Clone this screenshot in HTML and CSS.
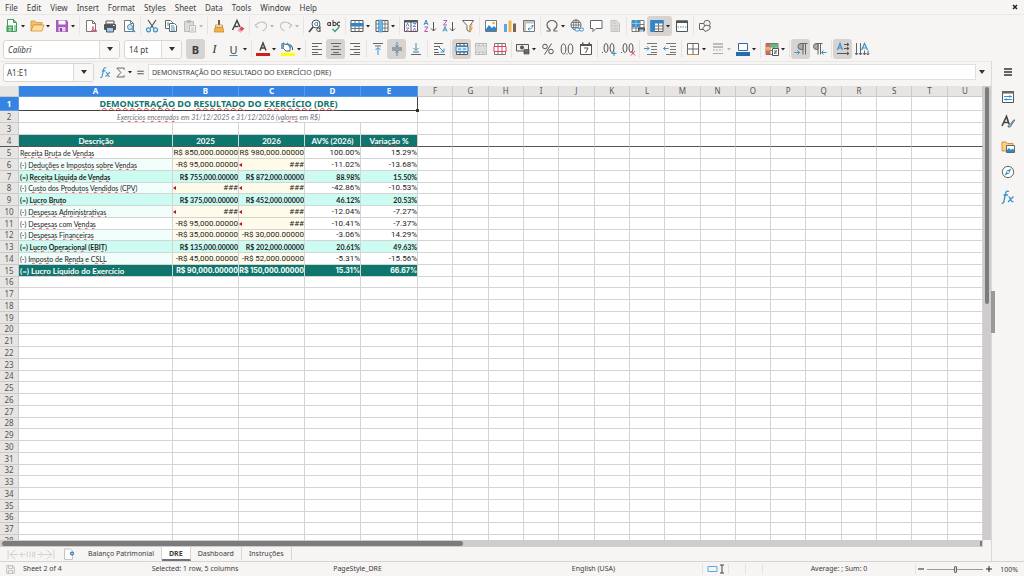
FILE: index.html
```html
<!DOCTYPE html>
<html lang="pt-BR">
<head>
<meta charset="utf-8">
<title>DRE - Calc</title>
<link rel="stylesheet" href="styles.css">
</head>
<body>
<svg class="sprite" aria-hidden="true">
  <symbol id="caret" viewBox="0 0 6 16"><path d="M1 7h4L3 9.500z" fill="#222"/></symbol>
  <symbol id="bigcaret" viewBox="0 0 8 8"><path d="M1 2h6L4 6z" fill="#333"/></symbol>
  <symbol id="new" viewBox="0 0 16 16"><path d="M3.500 1.500h6l3 3v9h-9z" fill="#fff" stroke="#3f9e57"/><path d="M9.500 1.500v3h3" fill="#7bc48d" stroke="#3f9e57"/><path d="M2.500 7.500H9V14H2.500z" fill="#3f9e57"/><path d="M4 9.500h4M4 12h4M6 8.500v5" stroke="#d9f2df" stroke-width=".7"/><path d="M10 8h2M10 10h2M10 12h2" stroke="#3f9e57"/></symbol>
  <symbol id="open" viewBox="0 0 16 16"><path d="M2 13V3h4l1.500 1.500H13V7H4.500z" fill="#f4c26b" stroke="#d9903a" stroke-width=".8"/><path d="M2 13l2.500-6H15l-2 6z" fill="#fde0a0" stroke="#d9903a" stroke-width=".8"/></symbol>
  <symbol id="save" viewBox="0 0 16 16"><path d="M2 2h10.500L14 3.500V14H2z" fill="#a85bbd"/><path d="M4.500 2.500h7v4h-7z" fill="#fff"/><path d="M4.500 9h7v4.500h-7z" fill="#e7cdee"/><path d="M6 10v3.500h2V10z" fill="#8a3fa2"/></symbol>
  <symbol id="pdf" viewBox="0 0 16 16"><path d="M3.500 2.500h6l3 3v8h-9z" fill="#fff" stroke="#777"/><path d="M9.500 2.500v3h3" fill="none" stroke="#777"/><path d="M8 13.500c2-2 2.500-4 2-5-.7 2 1 4 4 4.500-2-.8-4-.3-6 .5z" fill="none" stroke="#d9455c"/></symbol>
  <symbol id="print" viewBox="0 0 16 16"><path d="M4 3h8v3H4z" fill="#fff" stroke="#555"/><rect x="2" y="6" width="12" height="6" rx="1" fill="#555"/><path d="M4.500 9.500h7V14h-7z" fill="#9ed0ee" stroke="#555"/><path d="M11 7.500h1.500" stroke="#fff"/></symbol>
  <symbol id="preview" viewBox="0 0 16 16"><path d="M3.500 2.500h6l3 3v8h-9z" fill="#fff" stroke="#777"/><path d="M9.500 2.500v3h3" fill="none" stroke="#777"/><circle cx="9" cy="9" r="2.500" fill="#cfe8f7" stroke="#3a92c9"/><path d="M11 11l3 3" stroke="#3a92c9" stroke-width="1.400"/></symbol>
  <symbol id="cut" viewBox="0 0 16 16"><path d="M4 2l5.500 8M12 2l-5.500 8" stroke="#555" stroke-width="1.200"/><circle cx="4.500" cy="11.800" r="2" fill="none" stroke="#3a92c9" stroke-width="1.200"/><circle cx="11.500" cy="11.800" r="2" fill="none" stroke="#3a92c9" stroke-width="1.200"/></symbol>
  <symbol id="copy" viewBox="0 0 16 16"><path d="M2.500 2.500h5l2 2v6h-7z" fill="#fff" stroke="#666"/><path d="M6.500 5.500h5l2 2v6h-7z" fill="#fff" stroke="#666"/><path d="M8 8h3M8 10h4M8 12h4M4 5h2M4 7h2" stroke="#3a92c9"/></symbol>
  <symbol id="paste" viewBox="0 0 16 16"><path d="M2.500 3.500h9v10h-9z" fill="#ddd" stroke="#bbb"/><path d="M5 2h4v3H5z" fill="#bbb"/><path d="M7.500 7.500h6v6.500h-6z" fill="#f3f3f3" stroke="#bbb"/><path d="M9 10h3M9 12h3" stroke="#bbb"/></symbol>
  <symbol id="clone" viewBox="0 0 16 16"><path d="M7 2h2v5H7z" fill="#7a5c30"/><path d="M4.500 7h7v2h-7z" fill="#fff" stroke="#b9883c" stroke-width=".8"/><path d="M4 9.500h8l.7 4.500H3.300z" fill="#efb34e" stroke="#c98b2d" stroke-width=".8"/></symbol>
  <symbol id="clear" viewBox="0 0 16 16"><path d="M2.500 12L7 2.500 10 9M4.500 8.500h4" fill="none" stroke="#444" stroke-width="1.500"/><path d="M7.500 12.500l4-4 3 2-4 4z" fill="#e0475a"/><path d="M7.500 12.500l1.500-1.500 3 2-1.500 1.500z" fill="#f7b6be"/></symbol>
  <symbol id="undo" viewBox="0 0 16 16"><path d="M2 7l3 3M2 7l4-2M2.500 7c5-5 11-3 11 1 0 2.500-2 4-4 5" fill="none" stroke="#c4c2c0" stroke-width="1.100"/></symbol>
  <symbol id="redo" viewBox="0 0 16 16"><path d="M14 7l-3 3M14 7l-4-2M13.500 7c-5-5-11-3-11 1 0 2.500 2 4 4 5" fill="none" stroke="#c4c2c0" stroke-width="1.100"/></symbol>
  <symbol id="find" viewBox="0 0 16 16"><circle cx="9" cy="6" r="4" fill="#fff" stroke="#555"/><path d="M6 9l-4 5" stroke="#444" stroke-width="1.600"/><path d="M10.500 4v4M10.500 6.500a1.500 1.500 0 1 1 0-1" fill="none" stroke="#3a92c9"/><path d="M13 8v6M13 12.500a1.700 1.700 0 1 1 0-1.500" fill="none" stroke="#444"/></symbol>
  <symbol id="spell" viewBox="0 0 16 16"><path d="M4.500 4v4M4.500 6.500a1.500 1.500 0 1 1 0-1M7 2v6M7 6.500a1.600 1.600 0 1 0 0-1M14 4.500a1.800 1.800 0 1 0 0 3" fill="none" stroke="#444" stroke-width="1.100"/><path d="M6.500 11l2.500 2.500 4.500-5" fill="none" stroke="#35a36b" stroke-width="1.300"/></symbol>
  <symbol id="rowi" viewBox="0 0 16 16"><path d="M2 2.500h12v11H2z" fill="#fff" stroke="#555"/><path d="M2 10.500h12M6 2.500v11M10 2.500v11" stroke="#777"/><path d="M1.500 5h13v3.500h-13z" fill="#2f86c8"/></symbol>
  <symbol id="coli" viewBox="0 0 16 16"><path d="M2 2.500h12v11H2z" fill="#fff" stroke="#555"/><path d="M2 6h12M2 10h12M11 2.500v11" stroke="#777"/><path d="M4.500 2h4v12h-4z" fill="#6db5e4" stroke="#2f86c8" stroke-width=".6"/></symbol>
  <symbol id="sort" viewBox="0 0 16 16"><path d="M1.500 2.500h13v11h-13z" fill="#fff" stroke="#555"/><path d="M1.500 2h13v2.500h-13zM7.500 4h1v10h-1z" fill="#555"/><path d="M3 8.500L4.500 5 6 8.500M10 5.500h3l-3 3h3" fill="none" stroke="#3a92c9" stroke-width=".9"/><path d="M3 10h3l-3 3h3M10 13l1.500-3 1.500 3" fill="none" stroke="#b05cc0" stroke-width=".9"/></symbol>
  <symbol id="az" viewBox="0 0 16 16"><path d="M2 7l2-5 2 5M3 5.500h2" fill="none" stroke="#3a92c9"/><path d="M2.500 9h3.500l-3.500 4.500H6" fill="none" stroke="#b05cc0"/><path d="M11.500 4v9M9 10.500l2.500 2.500 2.500-2.500" fill="none" stroke="#555"/></symbol>
  <symbol id="za" viewBox="0 0 16 16"><path d="M2 13.500l2-5 2 5M3 12h2" fill="none" stroke="#3a92c9"/><path d="M2.500 2.500H6L2.500 7H6" fill="none" stroke="#b05cc0"/><path d="M11.500 4v9M9 10.500l2.500 2.500 2.500-2.500" fill="none" stroke="#555"/></symbol>
  <symbol id="filter" viewBox="0 0 16 16"><path d="M2.500 2.500h11L10 7.500V14l-3-2V7.500z" fill="#fff" stroke="#666"/><path d="M12 6l-2 4h2l-2 4" fill="none" stroke="#f0a53a" stroke-width="1.300"/></symbol>
  <symbol id="image" viewBox="0 0 16 16"><path d="M2.500 2.500h11v11h-11z" fill="#fff" stroke="#777"/><path d="M3 11l3-4 3 3 2-2 2 2v3H3z" fill="#2f86c8"/><circle cx="10.500" cy="5" r="1.300" fill="#f0b13a"/></symbol>
  <symbol id="chart" viewBox="0 0 16 16"><path d="M2 6h3v8H2z" fill="#5aa9dd"/><path d="M6.500 2.500h3V14h-3z" fill="#efb34e"/><path d="M11 5.500h3V14h-3z" fill="#7a6650"/></symbol>
  <symbol id="pivot" viewBox="0 0 16 16"><path d="M2.500 2.500h11v11h-11z" fill="#fff" stroke="#777"/><path d="M3 3h10v2.500H3zM3 3h2v10H3z" fill="#c5c3c1"/><path d="M7 11c4 0 4.500-1 4.500-4M10 8.500L11.500 7 13 8.500M8.500 9.500L7 11l1.500 1.500" fill="none" stroke="#3a92c9"/></symbol>
  <symbol id="omega" viewBox="0 0 16 16"><path d="M2.500 13h3.500v-1.500C4 10.500 3 9 3 7a5 4.500 0 0 1 10 0c0 2-1 3.500-3 4.500V13h3.500" fill="none" stroke="#666" stroke-width="1.200"/></symbol>
  <symbol id="link" viewBox="0 0 16 16"><circle cx="7" cy="7" r="5" fill="#fff" stroke="#666"/><path d="M2 7h10M7 2v10M3 4.500h8M3 9.500h6" stroke="#666" stroke-width=".8"/><ellipse cx="7" cy="7" rx="2.500" ry="5" fill="none" stroke="#666" stroke-width=".8"/><rect x="6" y="10" width="4.500" height="3" rx="1.500" fill="#fff" stroke="#3a92c9"/><rect x="10.500" y="10" width="4" height="3" rx="1.500" fill="#fff" stroke="#3a92c9"/></symbol>
  <symbol id="comment" viewBox="0 0 16 16"><path d="M2.500 2.500h11.500v8H8L5 13.500v-3H2.500z" fill="#fff" stroke="#666"/></symbol>
  <symbol id="hf" viewBox="0 0 16 16"><path d="M4 2.500h5.500l3 3v8H4z" fill="#dedcda" stroke="#c4c2c0"/><path d="M6 5h3M6 8h5M6 11h5" stroke="#c4c2c0"/></symbol>
  <symbol id="parea" viewBox="0 0 16 16"><path d="M2 2.500h12v11H2z" fill="#fff" stroke="#777"/><path d="M2 6.500h12M2 10h12M6 2.500v11M10 2.500v11" stroke="#777"/><path d="M2 2h8v7H2z" fill="#3a92c9"/><path d="M2 5.500h8M6 2v7" stroke="#a9d6f0" stroke-width=".7"/><rect x="8" y="9.500" width="7" height="3.500" fill="#555"/><path d="M9.500 11.500h4V14h-4z" fill="#9ed0ee"/></symbol>
  <symbol id="freeze" viewBox="0 0 16 16"><path d="M2 2.500h12v11H2z" fill="#fff" stroke="#555"/><path d="M2 8h12M2 11h12M9.500 5v9" stroke="#777"/><path d="M1.500 2h13v3.500H6V14H1.500z" fill="#2f86c8"/></symbol>
  <symbol id="split" viewBox="0 0 16 16"><path d="M2.500 3h11v10.500h-11z" fill="#fff" stroke="#555"/><path d="M2 2.500h12V5H2z" fill="#555"/><path d="M3.500 9h9" stroke="#3a92c9" stroke-dasharray="1.500 1"/></symbol>
  <symbol id="shapes" viewBox="0 0 16 16"><path d="M2.500 5.500h6v6h-6z" fill="none" stroke="#666"/><circle cx="10" cy="5.500" r="3.200" fill="#f5f4f2" stroke="#666"/><path d="M8 13.500l-2.500-3.500L9 7l4.500 1.500-1 3z" fill="#f5f4f2" stroke="#666"/></symbol>

  <symbol id="fcolor" viewBox="0 0 16 16"><path d="M5 9.500L8 2l3 7.500M6 7h4" fill="none" stroke="#444" stroke-width="1.500"/><path d="M1 12h14v3H1z" fill="#c9211e"/></symbol>
  <symbol id="bcolor" viewBox="0 0 16 16"><path d="M4 3l6 1v6H6L3 7z" fill="#fff" stroke="#666"/><path d="M2 8V3l2-1M7 2l4 5" stroke="#3a92c9" stroke-width="1.500" fill="none"/><path d="M10.500 3.500l2 3v2.500" stroke="#555" fill="none"/><path d="M1 12h14v3H1z" fill="#ffff00"/></symbol>
  <symbol id="al" viewBox="0 0 16 16"><path d="M3 2.500h10M3 5.500h6M3 8.500h10M3 11.500h6M3 13.500h10" stroke="#666"/></symbol>
  <symbol id="ac" viewBox="0 0 16 16"><path d="M3 2.500h10M5 5.500h6M3 8.500h10M5 11.500h6M3 13.500h10" stroke="#666"/></symbol>
  <symbol id="ar" viewBox="0 0 16 16"><path d="M3 2.500h10M7 5.500h6M3 8.500h10M7 11.500h6M3 13.500h10" stroke="#666"/></symbol>
  <symbol id="vt" viewBox="0 0 16 16"><path d="M3 2.500h10M5 5h6" stroke="#666"/><path d="M8 14V7M5.500 9L8 6.500 10.500 9" fill="none" stroke="#3a92c9"/></symbol>
  <symbol id="vm" viewBox="0 0 16 16"><path d="M3 7h10M3 9h10" stroke="#666"/><path d="M8 1v5M6.500 4.500L8 6l1.500-1.500M8 15v-5M6.500 11.500L8 10l1.500 1.500" fill="none" stroke="#3a92c9"/></symbol>
  <symbol id="vb" viewBox="0 0 16 16"><path d="M3 13.500h10M5 11h6" stroke="#666"/><path d="M8 2v7M5.500 7L8 9.500 10.500 7" fill="none" stroke="#3a92c9"/></symbol>
  <symbol id="wrap" viewBox="0 0 16 16"><path d="M3 2.500h9M3 5.500h6M3 8.500h4M3 11.500h5M3 13.500h11" stroke="#666"/><path d="M8 6l5 5M13 7.500V11H9.500" fill="none" stroke="#3a92c9"/></symbol>
  <symbol id="merge" viewBox="0 0 16 16"><path d="M2.500 2.500h11v11h-11zM2.500 5h11M2.500 11h11M6 2.500V5M10 2.500V5M6 11v2.500M10 11v2.500" fill="#fff" stroke="#555"/><path d="M2 5.500h12v5H2z" fill="#d8edf9" stroke="#2f86c8"/><path d="M4 8h3M9 8h3" stroke="#2f86c8"/></symbol>
  <symbol id="mcen" viewBox="0 0 16 16"><path d="M2.500 2.500h11v11h-11zM2.500 5h11M2.500 11h11M6 2.500V5M10 2.500V5M6 11v2.500M10 11v2.500" fill="#eee" stroke="#b8b6b4"/><path d="M2.500 5.500h11v5h-11z" fill="#ddd"/></symbol>
  <symbol id="unm" viewBox="0 0 16 16"><path d="M2.500 2.500h11v11h-11zM2.500 5.500h11M2.500 10.500h11M6 2.500v11M10 2.500v11" fill="#fff" stroke="#777"/><path d="M2 5.500h12v5H2zM6 5.500v5M10 5.500v5" fill="#fff" stroke="#d9455c"/></symbol>
  <symbol id="cur" viewBox="0 0 16 16"><path d="M1.500 3.500h12v6.500h-12z" fill="#eee" stroke="#555"/><circle cx="7" cy="6.500" r="2" fill="#555"/><path d="M9 8.500h5V13H9zM9 10h5M9 11.500h5" fill="#888" stroke="#444" stroke-width=".7"/></symbol>
  <symbol id="pct" viewBox="0 0 16 16"><circle cx="5" cy="5.500" r="2.300" fill="none" stroke="#555"/><circle cx="11" cy="10.500" r="2.300" fill="none" stroke="#555"/><path d="M11.500 2.500l-7 11" stroke="#555"/></symbol>
  <symbol id="num" viewBox="0 0 16 16"><ellipse cx="4.500" cy="8" rx="2.300" ry="5" fill="none" stroke="#555"/><ellipse cx="11.500" cy="8" rx="2.300" ry="5" fill="none" stroke="#555"/><path d="M7.500 12.500h1v1h-1z" fill="#555"/></symbol>
  <symbol id="date" viewBox="0 0 16 16"><path d="M2.500 3.500h11v10h-11z" fill="#fff" stroke="#555"/><path d="M2 3h12v2H2zM4 1.500h1.500V4H4zM10.500 1.500H12V4h-1.500z" fill="#555"/><path d="M6 7h4l-2.500 5" fill="none" stroke="#555"/></symbol>
  <symbol id="dadd" viewBox="0 0 16 16"><ellipse cx="5" cy="7" rx="2" ry="4.500" fill="none" stroke="#555"/><ellipse cx="11" cy="7" rx="2" ry="4.500" fill="none" stroke="#555"/><path d="M1 11h1v1H1z" fill="#555"/><path d="M13 10v5M10.500 12.500h5" stroke="#3a92c9"/></symbol>
  <symbol id="ddel" viewBox="0 0 16 16"><ellipse cx="5" cy="7" rx="2" ry="4.500" fill="none" stroke="#555"/><ellipse cx="11" cy="7" rx="2" ry="4.500" fill="none" stroke="#555"/><path d="M1 11h1v1H1z" fill="#555"/><path d="M11 10l4 4.500M15 10l-4 4.500" stroke="#e0475a"/></symbol>
  <symbol id="ind" viewBox="0 0 16 16"><path d="M4 2.500h10M8 5.500h6M8 8.500h6M8 11.500h6M4 13.500h10" stroke="#777"/><path d="M1 7.500h5M4 5.500l2 2-2 2" fill="none" stroke="#3a92c9"/></symbol>
  <symbol id="outd" viewBox="0 0 16 16"><path d="M4 2.500h10M8 5.500h6M8 8.500h6M8 11.500h6M4 13.500h10" stroke="#777"/><path d="M6.500 7.500h-5M3.500 5.500l-2 2 2 2" fill="none" stroke="#3a92c9"/></symbol>
  <symbol id="bord" viewBox="0 0 16 16"><path d="M2.500 2.500h11v11h-11z" fill="#fff" stroke="#666"/><path d="M8 3v10M3 8h10" stroke="#666"/><path d="M2 13.500h12" stroke="#b9883c"/></symbol>
  <symbol id="bsty" viewBox="0 0 16 16"><path d="M3 3h10M3 6h10" stroke="#aaa" stroke-width="1.500"/><path d="M3 9h10" stroke="#aaa" stroke-dasharray="2 1"/><path d="M3 12.500h10" stroke="#aaa"/></symbol>
  <symbol id="bcol" viewBox="0 0 16 16"><path d="M3.500 2.500h9v7h-9z" fill="#fff" stroke="#2a6cab"/><path d="M1 11h14v4H1z" fill="#2a6cab"/></symbol>
  <symbol id="cond" viewBox="0 0 16 16"><path d="M2 2.500h12v11H2zM2 6h12M2 9.500h12M6 2.500v11M10 2.500v11" fill="#fff" stroke="#777"/><path d="M2 3h4v3H2zM2 9.500h4V13H2z" fill="#e0626e"/><path d="M6 3h8v3H6z" fill="#5fb978"/><path d="M2 6h4v3.500H2z" fill="#efb34e"/><path d="M8.500 7.500h6v7h-6z" fill="#fff" stroke="#555"/><path d="M10 10h3M10 12h3M12.500 9l-2 4" stroke="#555" stroke-width=".8"/></symbol>
  <symbol id="ltr" viewBox="0 0 16 16"><path d="M10 2.500v11M12.500 2.500v11M14.500 2.500H8" fill="none" stroke="#666"/><path d="M10 2.500H8a3 3 0 0 0 0 6h2z" fill="#aaa" stroke="#666"/><path d="M1.500 11.500h5M4.500 9.500l2 2-2 2" fill="none" stroke="#3a92c9"/></symbol>
  <symbol id="rtl" viewBox="0 0 16 16"><path d="M6 2.500v11M8.500 2.500v11M10.500 2.500H4" fill="none" stroke="#666"/><path d="M6 2.500H4.500a3 3 0 0 0 0 6H6z" fill="#aaa" stroke="#666"/><path d="M14.500 11.500h-5M11.500 9.500l-2 2 2 2" fill="none" stroke="#3a92c9"/></symbol>
  <symbol id="th" viewBox="0 0 16 16"><path d="M2.500 9L5 2.500 7.500 9M3.500 7h3" fill="none" stroke="#3a92c9" stroke-width="1.200"/><path d="M9 3.500h5M9 7.500h5M2 12.500h12M12 2l2 1.500L12 5M12 6l2 1.500L12 9M12 11l2 1.500-2 1.500" fill="none" stroke="#555"/></symbol>
  <symbol id="tv" viewBox="0 0 16 16"><path d="M7.500 9L10.500 2.500 13.500 9M9 7h3" fill="none" stroke="#3a92c9" stroke-width="1.200"/><path d="M2.500 2v12M6.500 2v12M10.500 9.500V14M14 9.500V14M1 12l1.500 2L4 12M5 12l1.500 2L8 12M9 12l1.500 2 1.500-2M12.500 12l1.500 2 1-2" fill="none" stroke="#666"/></symbol>

  <symbol id="fx" viewBox="0 0 16 16"><path d="M9 2.500c-2-1-3 0-3.400 2L4 12c-.4 2-1.300 2.500-2.500 2M3.500 6h4.500" fill="none" stroke="#3a92c9" stroke-width="1.300"/><path d="M8.500 8c2-1 2 6 5 4.500M13.500 7.500L8 13" fill="none" stroke="#3a92c9" stroke-width="1.300"/></symbol>
  <symbol id="sum" viewBox="0 0 16 16"><path d="M12.500 4.500v-2h-9L8.500 8l-5 5.500h9v-2" fill="none" stroke="#666" stroke-width="1.200"/></symbol>
  <symbol id="eq" viewBox="0 0 16 16"><path d="M4 6.500h8M4 9.500h8" stroke="#555" stroke-width="1.300"/></symbol>
  <symbol id="menu" viewBox="0 0 16 16"><path d="M4 5h8M4 8h8M4 11h8" stroke="#333" stroke-width="1.400"/></symbol>
  <symbol id="props" viewBox="0 0 16 16"><path d="M2.500 2.500h11v11h-11z" fill="#fff" stroke="#555"/><path d="M2 2h12v2.500H2z" fill="#666"/><path d="M4 7.500h8M4 10.500h8" stroke="#3a92c9"/><path d="M9 6.500h1.500v2H9zM5.500 9.500H7v2H5.500z" fill="#3a92c9"/></symbol>
  <symbol id="styl" viewBox="0 0 16 16"><path d="M2 12L6.500 2.500 9 10M4 8.500h4.500" fill="none" stroke="#444" stroke-width="1.600"/><path d="M8 13c0-2 1-3 2.500-3L14 5.500l.8.700-3.300 4.800c0 1.500-1.500 2.500-3.500 2z" fill="#7bbbe4" stroke="#555" stroke-width=".7"/></symbol>
  <symbol id="gal" viewBox="0 0 16 16"><path d="M2 12V3h4l1.500 1.500H13V12z" fill="#f7cf86" stroke="#d9903a"/><path d="M6.500 6.500h8v7h-8z" fill="#fff" stroke="#666"/><path d="M7 11l2-2 2 2 1.500-1.500L14 11v2H7z" fill="#2f86c8"/></symbol>
  <symbol id="nav" viewBox="0 0 16 16"><circle cx="8" cy="8" r="5.700" fill="#fff" stroke="#666"/><path d="M11.500 4.500L9 9.500l-4.500 2L7 6.500z" fill="#3a92c9"/><circle cx="8" cy="8" r="1" fill="#fff"/></symbol>
  <symbol id="disk" viewBox="0 0 16 16"><path d="M2.500 2.500h9l2 2v9h-11zM5 2.500v4h6v-4M5 13.500v-4h6v4" fill="none" stroke="#aaa8a6"/></symbol>
</svg>

<header class="menubar">
  <nav class="menus" aria-label="Menu">
    <button>File</button><button>Edit</button><button>View</button><button>Insert</button><button>Format</button><button>Styles</button><button>Sheet</button><button>Data</button><button>Tools</button><button>Window</button><button>Help</button>
  </nav>
  <button class="close" aria-label="Close"><svg viewBox="0 0 6 6"><path d="M1 1l4 4M5 1L1 5" stroke="#222" stroke-width="1.500"/></svg></button>
</header>

<div class="toolbar" role="toolbar" aria-label="Standard">
  <button class="tool drop" aria-label="New"><svg><use href="#new"/></svg><svg class="car"><use href="#caret"/></svg></button>
  <button class="tool drop" aria-label="Open"><svg><use href="#open"/></svg><svg class="car"><use href="#caret"/></svg></button>
  <button class="tool drop" aria-label="Save"><svg><use href="#save"/></svg><svg class="car"><use href="#caret"/></svg></button>
  <i class="sep"></i>
  <button class="tool" aria-label="Export as PDF"><svg><use href="#pdf"/></svg></button>
  <button class="tool" aria-label="Print"><svg><use href="#print"/></svg></button>
  <button class="tool" aria-label="Print Preview"><svg><use href="#preview"/></svg></button>
  <i class="sep"></i>
  <button class="tool" aria-label="Cut"><svg><use href="#cut"/></svg></button>
  <button class="tool" aria-label="Copy"><svg><use href="#copy"/></svg></button>
  <button class="tool drop off" aria-label="Paste"><svg><use href="#paste"/></svg><svg class="car"><use href="#caret"/></svg></button>
  <i class="sep"></i>
  <button class="tool" aria-label="Clone Formatting"><svg><use href="#clone"/></svg></button>
  <button class="tool" aria-label="Clear Formatting"><svg><use href="#clear"/></svg></button>
  <i class="sep"></i>
  <button class="tool drop off" aria-label="Undo"><svg><use href="#undo"/></svg><svg class="car"><use href="#caret"/></svg></button>
  <button class="tool drop off" aria-label="Redo"><svg><use href="#redo"/></svg><svg class="car"><use href="#caret"/></svg></button>
  <i class="sep"></i>
  <button class="tool" aria-label="Find and Replace"><svg><use href="#find"/></svg></button>
  <button class="tool" aria-label="Spelling"><svg><use href="#spell"/></svg></button>
  <i class="sep"></i>
  <button class="tool drop" aria-label="Row"><svg><use href="#rowi"/></svg><svg class="car"><use href="#caret"/></svg></button>
  <button class="tool drop" aria-label="Column"><svg><use href="#coli"/></svg><svg class="car"><use href="#caret"/></svg></button>
  <i class="sep"></i>
  <button class="tool" aria-label="Sort"><svg><use href="#sort"/></svg></button>
  <button class="tool" aria-label="Sort Ascending"><svg><use href="#az"/></svg></button>
  <button class="tool" aria-label="Sort Descending"><svg><use href="#za"/></svg></button>
  <button class="tool" aria-label="AutoFilter"><svg><use href="#filter"/></svg></button>
  <i class="sep"></i>
  <button class="tool" aria-label="Image"><svg><use href="#image"/></svg></button>
  <button class="tool" aria-label="Chart"><svg><use href="#chart"/></svg></button>
  <button class="tool" aria-label="Pivot Table"><svg><use href="#pivot"/></svg></button>
  <i class="sep"></i>
  <button class="tool drop" aria-label="Symbol"><svg><use href="#omega"/></svg><svg class="car"><use href="#caret"/></svg></button>
  <button class="tool" aria-label="Hyperlink"><svg><use href="#link"/></svg></button>
  <button class="tool" aria-label="Comment"><svg><use href="#comment"/></svg></button>
  <button class="tool" aria-label="Headers and Footers"><svg><use href="#hf"/></svg></button>
  <i class="sep"></i>
  <button class="tool" aria-label="Define Print Area"><svg><use href="#parea"/></svg></button>
  <button class="tool drop on" aria-label="Freeze Rows and Columns"><svg><use href="#freeze"/></svg><svg class="car"><use href="#caret"/></svg></button>
  <button class="tool" aria-label="Split Window"><svg><use href="#split"/></svg></button>
  <i class="sep"></i>
  <button class="tool" aria-label="Show Draw Functions"><svg><use href="#shapes"/></svg></button>
</div>

<div class="toolbar format" role="toolbar" aria-label="Formatting">
  <div class="combo font"><input aria-label="Font Name" value="Calibri"><button aria-label="Font list"><svg><use href="#bigcaret"/></svg></button></div>
  <div class="combo size"><input aria-label="Font Size" value="14 pt"><button aria-label="Size list"><svg><use href="#bigcaret"/></svg></button></div>
  <button class="tool on letter bold">B</button>
  <button class="tool letter italic">I</button>
  <button class="tool drop letter under"><span>U</span><svg class="car"><use href="#caret"/></svg></button>
  <i class="sep"></i>
  <button class="tool drop" aria-label="Font Color"><svg><use href="#fcolor"/></svg><svg class="car"><use href="#caret"/></svg></button>
  <button class="tool drop" aria-label="Background Color"><svg><use href="#bcolor"/></svg><svg class="car"><use href="#caret"/></svg></button>
  <i class="sep"></i>
  <button class="tool" aria-label="Align Left"><svg><use href="#al"/></svg></button>
  <button class="tool on" aria-label="Center"><svg><use href="#ac"/></svg></button>
  <button class="tool" aria-label="Align Right"><svg><use href="#ar"/></svg></button>
  <i class="sep"></i>
  <button class="tool" aria-label="Align Top"><svg><use href="#vt"/></svg></button>
  <button class="tool on" aria-label="Center Vertically"><svg><use href="#vm"/></svg></button>
  <button class="tool" aria-label="Align Bottom"><svg><use href="#vb"/></svg></button>
  <i class="sep"></i>
  <button class="tool" aria-label="Wrap Text"><svg><use href="#wrap"/></svg></button>
  <i class="sep"></i>
  <button class="tool on" aria-label="Merge and Center"><svg><use href="#merge"/></svg></button>
  <button class="tool" aria-label="Merge Cells"><svg><use href="#mcen"/></svg></button>
  <button class="tool" aria-label="Unmerge Cells"><svg><use href="#unm"/></svg></button>
  <i class="sep"></i>
  <button class="tool drop" aria-label="Currency"><svg><use href="#cur"/></svg><svg class="car"><use href="#caret"/></svg></button>
  <button class="tool" aria-label="Percent"><svg><use href="#pct"/></svg></button>
  <button class="tool" aria-label="Number"><svg><use href="#num"/></svg></button>
  <button class="tool" aria-label="Date"><svg><use href="#date"/></svg></button>
  <i class="sep"></i>
  <button class="tool" aria-label="Add Decimal Place"><svg><use href="#dadd"/></svg></button>
  <button class="tool" aria-label="Delete Decimal Place"><svg><use href="#ddel"/></svg></button>
  <i class="sep"></i>
  <button class="tool" aria-label="Increase Indent"><svg><use href="#ind"/></svg></button>
  <button class="tool" aria-label="Decrease Indent"><svg><use href="#outd"/></svg></button>
  <i class="sep"></i>
  <button class="tool drop" aria-label="Borders"><svg><use href="#bord"/></svg><svg class="car"><use href="#caret"/></svg></button>
  <button class="tool drop off" aria-label="Border Style"><svg><use href="#bsty"/></svg><svg class="car"><use href="#caret"/></svg></button>
  <button class="tool drop" aria-label="Border Color"><svg><use href="#bcol"/></svg><svg class="car"><use href="#caret"/></svg></button>
  <i class="sep"></i>
  <button class="tool drop" aria-label="Conditional Formatting"><svg><use href="#cond"/></svg><svg class="car"><use href="#caret"/></svg></button>
  <i class="sep"></i>
  <button class="tool on" aria-label="Left-To-Right"><svg><use href="#ltr"/></svg></button>
  <button class="tool" aria-label="Right-To-Left"><svg><use href="#rtl"/></svg></button>
  <i class="sep"></i>
  <button class="tool on" aria-label="Text direction from left to right"><svg><use href="#th"/></svg></button>
  <button class="tool" aria-label="Text direction from top to bottom"><svg><use href="#tv"/></svg></button>
</div>

<div class="work">
  <main class="doc">
    <div class="formulabar">
      <div class="combo name"><input aria-label="Name Box" value="A1:E1"><button aria-label="Names"><svg><use href="#bigcaret"/></svg></button></div>
      <button class="fbtn" aria-label="Function Wizard"><svg><use href="#fx"/></svg></button>
      <button class="fbtn drop" aria-label="Select Function"><svg><use href="#sum"/></svg><svg class="car"><use href="#caret"/></svg></button>
      <button class="fbtn" aria-label="Formula"><svg><use href="#eq"/></svg></button>
      <input class="formula" aria-label="Input line" value="DEMONSTRAÇÃO DO RESULTADO DO EXERCÍCIO (DRE)">
      <button class="expand" aria-label="Expand"><svg><use href="#bigcaret"/></svg></button>
    </div>
    <div class="sheetwrap">
      <div class="sheet">
        <table class="grid">
          <colgroup><col class="c-head"><col class="c-a"><col class="c-b"><col class="c-c"><col class="c-d"><col class="c-e"></colgroup>
          <thead><tr><th></th><th class="sel">A</th><th class="sel">B</th><th class="sel">C</th><th class="sel">D</th><th class="sel">E</th></tr></thead>
          <tbody>
            <tr class="r-title"><th class="sel">1</th><td colspan="5" class="title"><u>DEMONSTRAÇÃO</u> DO <u>RESULTADO</u> DO <u>EXERCÍCIO</u> (<u>DRE</u>)<i class="handle"></i></td></tr>
            <tr><th>2</th><td colspan="5" class="subtitle"><u>Exercícios</u> <u>encerrados</u> em 31/12/2025 e 31/12/2026 (<u>valores</u> em R$)</td></tr>
            <tr><th>3</th><td></td><td></td><td></td><td></td><td></td></tr>
            <tr class="heads frozen"><th>4</th><td><u>Descrição</u></td><td>2025</td><td>2026</td><td>AV% (2026)</td><td><u>Variação</u> %</td></tr>
            <tr><th>5</th><td><u>Receita</u> <u>Bruta</u> de <u>Vendas</u></td><td class="in">R$ 850,000.00000</td><td class="in">R$ 980,000.00000</td><td>100.00%</td><td>15.29%</td></tr>
            <tr class="ded"><th>6</th><td>(-) <u>Deduções</u> e <u>Impostos</u> <u>sobre</u> <u>Vendas</u></td><td class="in">-R$ 95,000.00000</td><td class="in over">###</td><td>-11.02%</td><td>-13.68%</td></tr>
            <tr class="sub"><th>7</th><td>(=) <u>Receita</u> <u>Líquida</u> de <u>Vendas</u></td><td>R$ 755,000.00000</td><td>R$ 872,000.00000</td><td>88.98%</td><td>15.50%</td></tr>
            <tr class="ded"><th>8</th><td>(-) <u>Custo</u> dos <u>Produtos</u> <u>Vendidos</u> (<u>CPV</u>)</td><td class="in over">###</td><td class="in over">###</td><td>-42.86%</td><td>-10.53%</td></tr>
            <tr class="sub"><th>9</th><td>(=) <u>Lucro</u> <u>Bruto</u></td><td>R$ 375,000.00000</td><td>R$ 452,000.00000</td><td>46.12%</td><td>20.53%</td></tr>
            <tr class="ded"><th>10</th><td>(-) <u>Despesas</u> <u>Administrativas</u></td><td class="in over">###</td><td class="in over">###</td><td>-12.04%</td><td>-7.27%</td></tr>
            <tr><th>11</th><td>(-) <u>Despesas</u> com <u>Vendas</u></td><td class="in">-R$ 95,000.00000</td><td class="in over">###</td><td>-10.41%</td><td>-7.37%</td></tr>
            <tr class="ded"><th>12</th><td>(-) <u>Despesas</u> <u>Financeiras</u></td><td class="in">-R$ 35,000.00000</td><td class="in">-R$ 30,000.00000</td><td>-3.06%</td><td>14.29%</td></tr>
            <tr class="sub"><th>13</th><td>(=) <u>Lucro</u> <u>Operacional</u> (<u>EBIT</u>)</td><td>R$ 135,000.00000</td><td>R$ 202,000.00000</td><td>20.61%</td><td>49.63%</td></tr>
            <tr class="ded"><th>14</th><td>(-) <u>Imposto</u> de <u>Renda</u> e <u>CSLL</u></td><td class="in">-R$ 45,000.00000</td><td class="in">-R$ 52,000.00000</td><td>-5.31%</td><td>-15.56%</td></tr>
            <tr class="total"><th>15</th><td>(=) <u>Lucro</u> <u>Líquido</u> do <u>Exercício</u></td><td>R$ 90,000.00000</td><td>R$ 150,000.00000</td><td>15.31%</td><td>66.67%</td></tr>
          </tbody>
        </table>
      </div>
      <div class="vscroll"><i></i></div>
    </div>
    <div class="hscroll"><i></i><b></b></div>
    <div class="tabs">
      <svg class="tabnav" viewBox="0 0 52 12" fill="none" stroke="#d0cecc"><path d="M1 1v10M9 1L3 6l6 5M4 6h8M51 1v10M43 1l6 5-6 5M40 6h8M17 3l-3 3 3 3M14 6h6M36 3l3 3-3 3M33 6h6M22 3v6M25 3v6M28 3v6M30 3v6"/></svg>
      <button class="add" aria-label="Add Sheet"><svg viewBox="0 0 12 12"><path d="M1.500 1h6l2 2v8.500h-8z" fill="#fff" stroke="#c8c6c4"/><circle cx="9" cy="5.500" r="2" fill="#2a6cab"/><path d="M8 5.500h2M9 4.500v2" stroke="#fff" stroke-width=".6"/></svg></button>
      <div class="tablist" role="tablist"><button role="tab">Balanço Patrimonial</button><button role="tab" aria-selected="true" class="active">DRE</button><button role="tab">Dashboard</button><button role="tab">Instruções</button></div>
    </div>
  </main>
  <aside class="sidebar" aria-label="Sidebar">
    <button aria-label="Sidebar Settings"><svg><use href="#menu"/></svg></button>
    <button aria-label="Properties"><svg><use href="#props"/></svg></button>
    <button aria-label="Styles"><svg><use href="#styl"/></svg></button>
    <button aria-label="Gallery"><svg><use href="#gal"/></svg></button>
    <button aria-label="Navigator"><svg><use href="#nav"/></svg></button>
    <button aria-label="Functions"><svg><use href="#fx"/></svg></button>
    <i class="splitter"></i>
  </aside>
</div>

<footer class="status">
  <span><svg class="disk"><use href="#disk"/></svg></span>
  <span class="left">Sheet 2 of 4</span>
  <span>Selected: 1 row, 5 columns</span>
  <span>PageStyle_DRE</span>
  <span></span>
  <span>English (USA)</span>
  <span class="line"><svg class="mode" viewBox="0 0 18 10" fill="none"><path d="M1 2.500h9v5H1z" stroke="#5aa9dd"/><path d="M13 1h4M13 9h4M15 1v8" stroke="#444"/></svg></span>
  <span class="line"></span>
  <span class="line"></span>
  <span class="line">Average: ; Sum: 0</span>
  <span class="zoom line"><button aria-label="Zoom Out"><svg viewBox="0 0 6 6"><path d="M0 3h6" stroke="#222"/></svg></button><input type="range" aria-label="Zoom" min="0" max="100" value="50"><button aria-label="Zoom In"><svg viewBox="0 0 6 6"><path d="M0 3h6M3 0v6" stroke="#222"/></svg></button><output>100%</output></span>
</footer>
<script src="sheet.js"></script>
</body>
</html>
```

FILE: styles.css
```css
* { box-sizing: border-box; }
body {
  margin: 0;
  height: 100vh;
  display: flex;
  flex-direction: column;
  overflow: hidden;
  background: #f6f5f4;
  color: #3d3d3d;
  font-family: "Noto Sans", "Open Sans", sans-serif;
  font-size: 7px;
}
button, input {
  font: inherit;
  color: inherit;
  border: 0;
  margin: 0;
  padding: 0;
  background: none;
  min-width: 0;
}
svg { display: block; width: 16px; height: 16px; flex: none; }
.sprite { display: none; }

/* menu bar */
.menubar {
  display: flex;
  justify-content: space-between;
  align-items: center;
  height: 15px;
  flex: none;
  padding: 0 6px 0 5px;
  border-bottom: 1px solid #eae8e6;
  font-size: 8px;
}
.menus { display: flex; gap: 9px; }
.close svg { width: 6px; height: 6px; }

/* toolbars */
.toolbar {
  display: flex;
  align-items: center;
  height: 22px;
  flex: none;
  padding-left: 2px;
}
.toolbar.format { height: 24px; padding-left: 3px; }
.tool {
  display: flex;
  align-items: center;
  justify-content: center;
  flex: none;
  width: 19px;
  height: 20px;
  border-radius: 3px;
}
.tool.drop { width: 25px; }
.tool.on { background: #d6d3d0; }
.car { width: 6px; height: 16px; }
.off .car { opacity: .3; }
.sep {
  flex: none;
  width: 4px;
  height: 18px;
  background: linear-gradient(90deg, transparent 2px, #e6e4e2 2px, #e6e4e2 3px, transparent 3px);
}
.letter { font-size: 11px; }
.bold { font-weight: 700; }
.italic { font-style: italic; font-family: "Liberation Serif", serif; font-size: 13px; }
.under span { width: 16px; text-decoration: underline; text-decoration-color: #3a92c9; }

.combo {
  display: flex;
  flex: none;
  height: 19px;
  border: 1px solid #d8d5d2;
  border-radius: 3px;
  background: #fff;
  overflow: hidden;
}
.combo input { flex: 1; padding-left: 4px; font-size: 8px; }
.combo button {
  display: flex;
  align-items: center;
  justify-content: center;
  width: 20px;
  border-left: 1px solid #dedbd8;
  background: #f9f8f7;
}
.combo svg, .expand svg { width: 8px; height: 8px; }
.font { width: 117px; margin-right: 4px; }
.font input { font-style: italic; }
.size { width: 58px; margin-right: 4px; }
.name { width: 91px; margin-right: 4px; }
.name input { padding-left: 3px; }

/* document area and sidebar */
.work { flex: 1; display: flex; min-height: 0; }
.doc { flex: 1; min-width: 0; display: flex; flex-direction: column; }
.formulabar {
  display: flex;
  align-items: center;
  height: 25px;
  padding: 0 3px 4px;
  flex: none;
  border-top: 1px solid #eae8e6;
}
.fbtn { display: flex; align-items: center; justify-content: center; width: 15px; flex: none; }
.fbtn.drop { width: 20px; }
.fbtn svg { width: 13px; height: 13px; }
.fbtn .car { width: 6px; height: 16px; }
.formula {
  flex: 1;
  height: 16px;
  padding: 0 3px;
  border: 1px solid #e2e0de;
  background: #fff;
}
.expand { width: 12px; display: flex; justify-content: center; }

.sheetwrap { flex: 1; display: flex; min-height: 0; }
.sheet { flex: 1; overflow: hidden; background: #fff; }
.vscroll { width: 8px; background: #cfcdcb; padding: 1px 2px; }
.vscroll i { display: block; width: 4px; height: 48%; border-radius: 2px; background: #7c7c7c; }
.hscroll {
  display: flex;
  justify-content: space-between;
  align-items: center;
  height: 7px;
  flex: none;
  margin-right: 8px;
  padding: 0 1px 0 2px;
  background: #cfcdcb;
}
.hscroll i { width: 47%; height: 5px; border-radius: 3px; background: #7c7c7c; }
.hscroll b { width: 2px; height: 5px; background: #7c7c7c; }

/* grid */
.grid {
  width: 100%;
  table-layout: fixed;
  border-collapse: separate;
  border-spacing: 0;
  font-family: Lato, "Open Sans", sans-serif;
  color: #222;
}
.c-head { width: 19px; }
.c-a { width: 154px; }
.c-b, .c-c { width: 66px; }
.c-d { width: 56px; }
.c-e { width: 57px; }
.grid th, .grid td {
  height: 12px;
  padding: 0;
  line-height: 10px;
  border-right: 1px solid #d4d4d4;
  border-bottom: 1px solid #d4d4d4;
  overflow: hidden;
  white-space: nowrap;
}
.grid th {
  background: #e6e5e4;
  border-color: #cbcac9;
  font-family: "Noto Sans", sans-serif;
  font-weight: 400;
  font-size: 8px;
  color: #555;
}
.grid thead th { height: 11px; }
.grid th.sel { background: #3584e4; border-color: #5b9aea; color: #fff; font-weight: 700; }
.grid tbody tr:nth-child(4n):not(.frozen) > * { height: 11px; }
.grid td { font-family: Roboto, sans-serif; font-size: 8px; text-align: right; }
.grid td:nth-child(2) { font-family: Lato, sans-serif; font-size: 7px; text-align: left; padding-left: 1px; }
.grid u {
  text-decoration: underline wavy #d84a4a 1px;
  text-decoration-skip-ink: none;
  text-underline-offset: 0;
}
.grid .r-title > * { height: 14px; }
.grid td.title {
  position: relative;
  overflow: visible;
  line-height: 12px;
  font-family: "Noto Sans", sans-serif;
  font-size: 9px;
  font-weight: 700;
  text-align: center;
  color: #0f766e;
  border-color: #444;
}
.handle { position: absolute; right: -2px; bottom: -2px; width: 3px; height: 3px; background: #333; }
.grid td.subtitle { font-style: italic; text-align: center; color: #6b7280; }
.grid .frozen > * { border-bottom-color: #555; }
.grid .heads td:nth-child(-n+6) {
  background: #0f766e;
  color: #fff;
  font-family: Lato, sans-serif;
  font-weight: 700;
  font-size: 8px;
  text-align: center;
}
.in { background: #fffbeb; }
.ded td:nth-child(2) { background: #f0fdfa; }
.grid .sub td:nth-child(-n+6) { background: #ccfbf1; font-family: Lato, sans-serif; font-weight: 700; font-size: 7px; }
.grid .total td:nth-child(-n+6) { background: #0f766e; color: #fff; font-family: Inter, sans-serif; font-weight: 700; font-size: 7px; }
.grid .total td:nth-child(2) { font-family: Lato, sans-serif; font-size: 8px; }
.over::before {
  content: "";
  float: left;
  margin-top: 3px;
  border: 2px solid transparent;
  border-left-width: 0;
  border-right: 3px solid #b3122a;
}

/* sheet tabs */
.tabs { display: flex; height: 14px; flex: none; align-items: center; padding-left: 5px; }
.tabnav { width: 52px; height: 11px; }
.add { margin: 0 6px; }
.add svg { width: 12px; height: 12px; }
.tablist { display: flex; align-self: stretch; }
.tablist button { padding: 0 7px; border-right: 1px solid #d8d5d2; border-bottom: 2px solid transparent; }
.tablist .active { background: #fff; font-weight: 700; border-bottom-color: #6d7378; }

.sidebar {
  position: relative;
  width: 33px;
  flex: none;
  display: flex;
  flex-direction: column;
  align-items: center;
  gap: 9px;
  padding-top: 3px;
  border-left: 1px solid #dcdad8;
}
.splitter { position: absolute; left: -1px; top: 46%; width: 4px; height: 42px; background: #999; }

/* status bar */
.status {
  display: grid;
  grid-template-columns: 20px 80fr 190fr 135fr 60fr 217fr 26px 17px 17px 153fr 109px;
  align-items: center;
  height: 15px;
  flex: none;
  border-top: 1px solid #d6d3d0;
  text-align: center;
}
.status > span { min-height: 10px; white-space: nowrap; }
.status .left { text-align: left; padding-left: 3px; }
.status .line { border-left: 1px solid #e6e4e2; }
.disk { width: 11px; height: 11px; margin: 0 auto; }
.mode { width: 18px; height: 10px; margin: 0 auto; }
.zoom { display: flex; align-items: center; justify-content: flex-end; gap: 3px; padding-right: 6px; }
.zoom svg { width: 6px; height: 6px; }
.zoom input {
  appearance: none;
  width: 56px;
  height: 10px;
  background: linear-gradient(#999, #999) center / 100% 1px no-repeat;
}
.zoom input::-webkit-slider-thumb {
  appearance: none;
  width: 3px;
  height: 7px;
  border: 1px solid #666;
  border-radius: 1px;
  background: #ddd;
}
.zoom output { margin-left: 5px; }
```

FILE: sheet.js
```js
// Extends the grid with the empty columns F-U and rows 16-38.
const table = document.querySelector(".grid");
const letters = "FGHIJKLMNOPQRSTU".split("");
const colgroup = table.querySelector("colgroup");
const headRow = table.tHead.rows[0];
const body = table.tBodies[0];

for (const letter of letters) {
  colgroup.append(document.createElement("col"));
  const th = document.createElement("th");
  th.textContent = letter;
  headRow.append(th);
}
for (const row of body.rows) {
  for (const letter of letters) row.insertCell();
}
for (let n = 16; n <= 38; n++) {
  const row = body.insertRow();
  const th = document.createElement("th");
  th.textContent = n;
  row.append(th);
  for (let c = 0; c < letters.length + 5; c++) row.insertCell();
}
```
